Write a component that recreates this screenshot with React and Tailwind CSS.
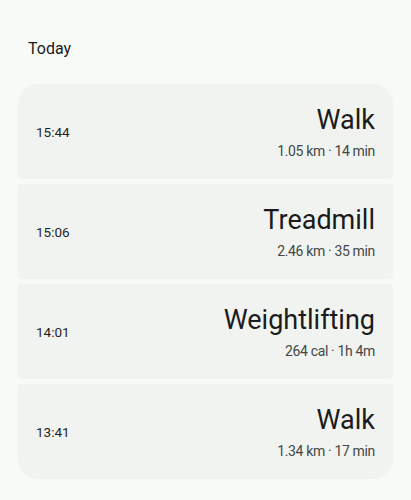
import React from "react";

const sessions = [
  { time: "15:44", title: "Walk", detail: "1.05 km · 14 min" },
  { time: "15:06", title: "Treadmill", detail: "2.46 km · 35 min" },
  { time: "14:01", title: "Weightlifting", detail: "264 cal · 1h 4m" },
  { time: "13:41", title: "Walk", detail: "1.34 km · 17 min" },
];

const SessionCard = ({ time, title, detail, first, last }) => {
  return (
    <article
      className={`flex items-center justify-between h-[95px] bg-[#f1f3f1] pl-[18px] pr-[18px] ${
        first ? "rounded-t-[20px] rounded-b-[4px]" : last ? "rounded-b-[20px] rounded-t-[4px]" : "rounded-[4px]"
      }`}
    >
      <div className="text-[13.5px] text-[#1f1f1f] pt-[1px]">{time}</div>
      <div className="flex flex-col items-end">
        <div className="text-[27px] leading-[34px] text-[#1b1b1b]">{title}</div>
        <div className="text-[14px] leading-[20px] tracking-tight text-[#444746] mt-[4px]">{detail}</div>
      </div>
    </article>
  );
};

export default function App() {
  return (
    <div
      className="w-[411px] h-[500px] bg-[#f8faf8] overflow-hidden"
      style={{ fontFamily: "Roboto, 'Open Sans', sans-serif" }}
    >
      {/* Section header */}
      <div className="pt-[37px] pl-[28px] text-[16px] leading-[23px] text-[#1b1b1b]">Today</div>

      {/* Sessions */}
      <div className="mt-[24px] mx-[18px] flex flex-col gap-[5px]">
        {sessions.map((s, i) => (
          <SessionCard key={i} {...s} first={i === 0} last={i === sessions.length - 1} />
        ))}
      </div>
    </div>
  );
}
